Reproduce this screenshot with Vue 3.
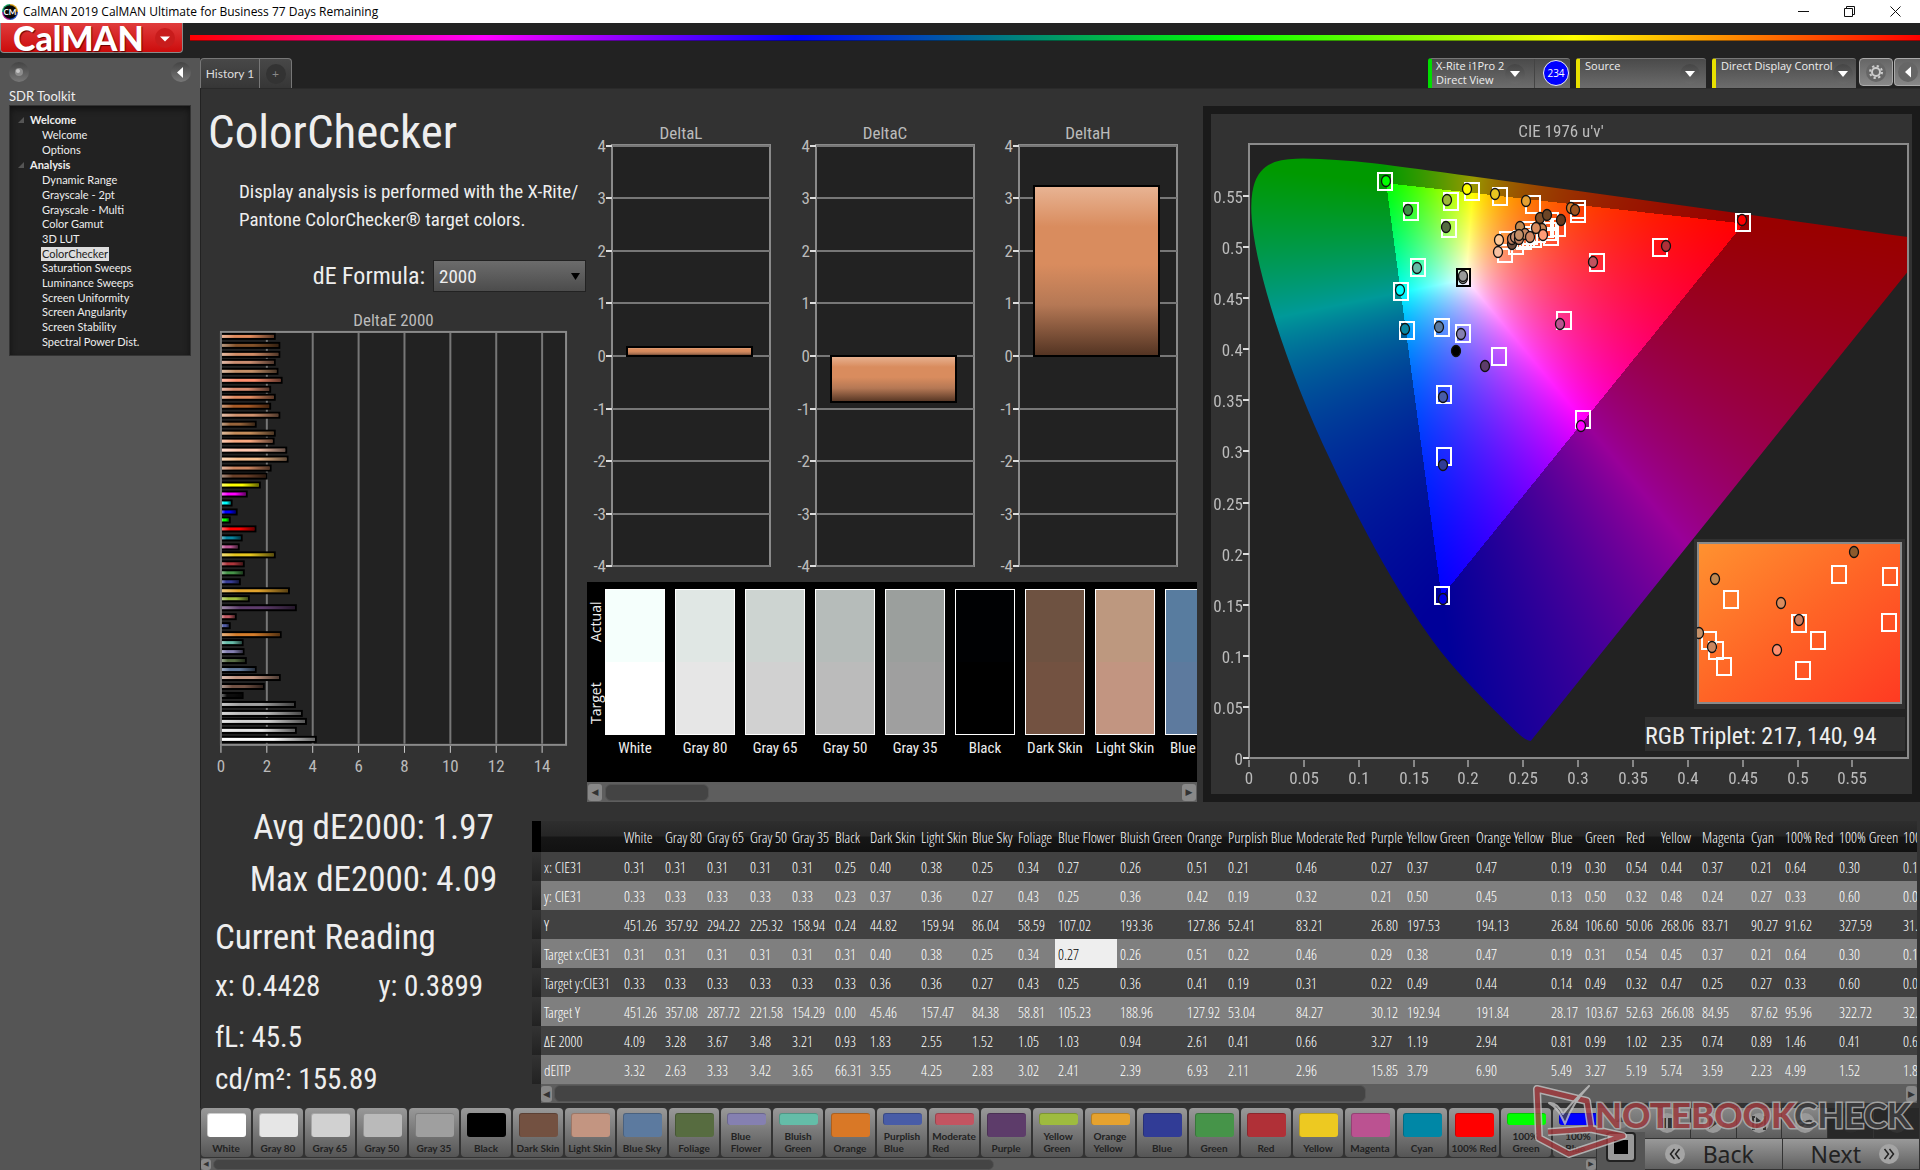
<script setup>
import { onMounted, ref } from 'vue'

const tree = [
  { title: 'Welcome', items: ['Welcome', 'Options'] },
  {
    title: 'Analysis',
    items: ['Dynamic Range', 'Grayscale - 2pt', 'Grayscale - Multi', 'Color Gamut', '3D LUT', 'ColorChecker', 'Saturation Sweeps', 'Luminance Sweeps', 'Screen Uniformity', 'Screen Angularity', 'Screen Stability', 'Spectral Power Dist.'],
  },
]

// DeltaE 2000 bars, top to bottom: colour and value
const deBars = [
  ['#e08a5c', 2.3], ['#84522a', 2.5], ['#d08c66', 2.5], ['#c98c70', 2.3], ['#c49068', 2.42], ['#ff9070', 2.6],
  ['#d98c70', 2.1], ['#e08a60', 2.3], ['#a85a26', 2.1], ['#d0926e', 2.5], ['#96633a', 1.47], ['#c48c5a', 2.3],
  ['#f8a880', 2.25], ['#ffc8b0', 2.8], ['#f8c090', 2.86], ['#cc8560', 2.12], ['#6c4028', 1.95],
  ['#ffff00', 1.65], ['#ff00ff', 1.08], ['#00ffff', 0.42], ['#0000ff', 0.64], ['#00ff00', 0.34], ['#ff0000', 1.46],
  ['#0885a1', 0.86], ['#bb5695', 0.73], ['#e7c71f', 2.3], ['#af363c', 0.95], ['#469449', 0.95], ['#383d96', 0.78],
  ['#e0a32e', 2.92], ['#9dbc40', 1.17], ['#5e3c6c', 3.22], ['#c15a63', 0.6], ['#505ba6', 0.34], ['#d67e2c', 2.56],
  ['#67bdaa', 0.9], ['#8580b1', 0.94], ['#576c43', 1.04], ['#627a9d', 1.47], ['#c29682', 2.52], ['#735244', 1.82],
  ['#0c0c0c', 0.9], ['#a0a0a0', 3.18], ['#bbbbbb', 3.48], ['#d0d0d0', 3.66], ['#e6e6e6', 3.22], ['#ffffff', 4.09],
]

const deltas = [
  { name: 'DeltaL', x: 25, title: 94, top: 235, height: 9 },
  { name: 'DeltaC', x: 229, title: 298, top: 244, height: 46 },
  { name: 'DeltaH', x: 432, title: 501, top: 74, height: 170 },
]
const deltaTicks = [4, 3, 2, 1, 0, -1, -2, -3, -4]
const deltaY = (v) => Math.round(244 - v * 52.6)

const patches = [
  ['White', '#f5fffc', '#ffffff'], ['Gray 80', '#e0e7e4', '#e6e6e6'], ['Gray 65', '#cdd4d1', '#d1d1d1'],
  ['Gray 50', '#b6bcba', '#bbbbbb'], ['Gray 35', '#9b9f9d', '#9f9f9f'], ['Black', '#000103', '#000000'],
  ['Dark Skin', '#6e5241', '#735241'], ['Light Skin', '#bd987f', '#c29581'], ['Blue Sky', '#587c9f', '#5d7a9e'],
]

const columns = [
  ['White', 41], ['Gray 80', 42], ['Gray 65', 43], ['Gray 50', 42], ['Gray 35', 43], ['Black', 35], ['Dark Skin', 51],
  ['Light Skin', 51], ['Blue Sky', 46], ['Foliage', 40], ['Blue Flower', 62], ['Bluish Green', 67], ['Orange', 41],
  ['Purplish Blue', 68], ['Moderate Red', 75], ['Purple', 36], ['Yellow Green', 69], ['Orange Yellow', 75], ['Blue', 34],
  ['Green', 41], ['Red', 35], ['Yellow', 41], ['Magenta', 49], ['Cyan', 34], ['100% Red', 54], ['100% Green', 64], ['100% Blue', 50],
]
const rows = [
  ['x: CIE31', '0.31 0.31 0.31 0.31 0.31 0.25 0.40 0.38 0.25 0.34 0.27 0.26 0.51 0.21 0.46 0.27 0.37 0.47 0.19 0.30 0.54 0.44 0.37 0.21 0.64 0.30 0.15'],
  ['y: CIE31', '0.33 0.33 0.33 0.33 0.33 0.23 0.37 0.36 0.27 0.43 0.25 0.36 0.42 0.19 0.32 0.21 0.50 0.45 0.13 0.50 0.32 0.48 0.24 0.27 0.33 0.60 0.06'],
  ['Y', '451.26 357.92 294.22 225.32 158.94 0.24 44.82 159.94 86.04 58.59 107.02 193.36 127.86 52.41 83.21 26.80 197.53 194.13 26.84 106.60 50.06 268.06 83.71 90.27 91.62 327.59 31.65'],
  ['Target x:CIE31', '0.31 0.31 0.31 0.31 0.31 0.31 0.40 0.38 0.25 0.34 0.27 0.26 0.51 0.22 0.46 0.29 0.38 0.47 0.19 0.31 0.54 0.45 0.37 0.21 0.64 0.30 0.15'],
  ['Target y:CIE31', '0.33 0.33 0.33 0.33 0.33 0.33 0.36 0.36 0.27 0.43 0.25 0.36 0.41 0.19 0.31 0.22 0.49 0.44 0.14 0.49 0.32 0.47 0.25 0.27 0.33 0.60 0.06'],
  ['Target Y', '451.26 357.08 287.72 221.58 154.29 0.00 45.46 157.47 84.38 58.81 105.23 188.96 127.92 53.04 84.27 30.12 192.94 191.84 28.17 103.67 52.63 266.08 84.95 87.62 95.96 322.72 32.58'],
  ['ΔE 2000', '4.09 3.28 3.67 3.48 3.21 0.93 1.83 2.55 1.52 1.05 1.03 0.94 2.61 0.41 0.66 3.27 1.19 2.94 0.81 0.99 1.02 2.35 0.74 0.89 1.46 0.41 0.68'],
  ['dEITP', '3.32 2.63 3.33 3.42 3.65 66.31 3.55 4.25 2.83 3.02 2.41 2.39 6.93 2.11 2.96 15.85 3.79 6.90 5.49 3.27 5.19 5.74 3.59 2.23 4.99 1.52 1.86'],
].map(([label, values]) => ({ label, values: values.split(' ') }))

const swatches = [
  ['White', '#ffffff'], ['Gray 80', '#e6e6e6'], ['Gray 65', '#d1d1d1'], ['Gray 50', '#bababa'], ['Gray 35', '#9f9f9f'],
  ['Black', '#000000'], ['Dark Skin', '#735141'], ['Light Skin', '#c39581'], ['Blue Sky', '#5c7a9f'], ['Foliage', '#576c40'],
  ['Blue Flower', '#8580b1', 1], ['Bluish Green', '#64bda8', 1], ['Orange', '#d97826'], ['Purplish Blue', '#485ca7', 1],
  ['Moderate Red', '#c35461', 1], ['Purple', '#5d3c6a'], ['Yellow Green', '#9ebb3f', 1], ['Orange Yellow', '#e6a22e', 1],
  ['Blue', '#313c96'], ['Green', '#469449'], ['Red', '#b03037'], ['Yellow', '#edc921'], ['Magenta', '#bb5291'],
  ['Cyan', '#0087a6'], ['100% Red', '#ff0000'], ['100% Green', '#00ff00', 1], ['100% Blue', '#0000ff', 1],
]

// CIE diagram, in the units of the 701 x 680 drawing; the plot spans 38..697 by 30..644
const targets = [
  [174, 67], [200, 97], [240, 87], [238, 114], [207, 153], [190, 177], [196, 216], [231, 213], [252, 219], [288, 242],
  [261, 77], [289, 82], [322, 90], [367, 95], [367, 99], [386, 148], [353, 206], [532, 108], [449, 133], [233, 280],
  [372, 305], [233, 342], [231, 481],
  [294, 139], [296, 126], [305, 131], [310, 125], [313, 126], [316, 124], [319, 121], [323, 124], [340, 107],
  [347, 113], [340, 122], [338, 117], [335, 114], [316, 116], [327, 119],
]
const readings = [
  [175, 67, '#00ff00'], [197, 96, '#3d8f45'], [236, 86, '#9cb838'], [235, 113, '#546b40'], [206, 154, '#64bba5'],
  [189, 176, '#00ffff'], [194, 215, '#0885a0'], [228, 213, '#5c7a9f'], [250, 220, '#8580b1'], [245, 237, '#000000'],
  [256, 75, '#ffff00'], [284, 80, '#e9c520'], [315, 87, '#e5a030'], [360, 94, '#d87a28'], [364, 96, '#a05520'],
  [252, 164, '#c0c0c0'], [252, 162, '#9a9a9a'], [382, 148, '#c1535f'], [349, 210, '#b9548f'], [531, 106, '#ff0000'],
  [455, 132, '#af3038'], [274, 252, '#5d3c6a'], [232, 283, '#485ca7'], [370, 312, '#ff00ff'], [232, 351, '#313c96'],
  [232, 485, '#0000e0'],
  [329, 104, '#80502a'], [336, 101, '#6c4526'], [350, 106, '#65391f'], [309, 113, '#c08850'], [288, 126, '#ffc896'],
  [287, 138, '#f8c0a0'], [301, 130, '#6c4a3a'], [301, 125, '#c08060'], [304, 123, '#c99070'], [308, 125, '#c08060'],
  [314, 120, '#c88860'], [308, 121, '#c49068'], [319, 123, '#d08864'], [331, 115, '#c08050'], [325, 114, '#d98c5e'],
  [332, 121, '#ff9c78'],
]
const insetTargets = [[142, 32], [193, 34], [34, 57], [102, 81], [192, 80], [121, 98], [12, 98], [19, 108], [27, 124], [106, 128]]
const insetReadings = [[157, 10, '#8c5a2c'], [18, 37, '#c08850'], [84, 61, '#d98c5e'], [102, 78, '#d08060'], [80, 108, '#ff9070'], [15, 105, '#c88560'], [2, 91, '#c49068']]
const uTicks = ['0', '0.05', '0.1', '0.15', '0.2', '0.25', '0.3', '0.35', '0.4', '0.45', '0.5', '0.55']
const uX = (i) => Math.round(38 + i * 54.85)
const vY = (i) => Math.round(644 - i * 51.1)

// spectral locus, CIE 1931 xy
const locus = [
  [0.1741, 0.005], [0.1714, 0.0051], [0.1644, 0.0109], [0.1566, 0.0177], [0.144, 0.0297], [0.1355, 0.0399],
  [0.1241, 0.0578], [0.1096, 0.0868], [0.0913, 0.1327], [0.0687, 0.2007], [0.0454, 0.295], [0.0235, 0.4127],
  [0.0082, 0.5384], [0.0039, 0.6548], [0.0139, 0.7502], [0.0389, 0.812], [0.0743, 0.8338], [0.1142, 0.8262],
  [0.1547, 0.8059], [0.2296, 0.7543], [0.3016, 0.6923], [0.3731, 0.6245], [0.4441, 0.5547], [0.5125, 0.4866],
  [0.5752, 0.4242], [0.627, 0.3725], [0.6658, 0.334], [0.6915, 0.3083], [0.719, 0.2809], [0.7347, 0.2653],
]
const plot = ref(null)

onMounted(() => {
  const W = 659
  const H = 614
  const sx = 1097
  const sy = 1022
  const layer = document.createElement('canvas')
  layer.width = W
  layer.height = H
  const lctx = layer.getContext('2d')
  const img = lctx.createImageData(W, H)
  for (let j = 0; j < H; j++) {
    for (let i = 0; i < W; i++) {
      const u = (i + 0.5) / sx
      const v = (H - j - 0.5) / sy
      const d = 6 * u - 16 * v + 12
      const x = (9 * u) / d
      const y = (4 * v) / d
      const z = 1 - x - y
      const rgb = [
        3.2406 * x - 1.5372 * y - 0.4986 * z,
        -0.9689 * x + 1.8758 * y + 0.0415 * z,
        0.0557 * x - 0.204 * y + 1.057 * z,
      ]
      const max = Math.max(...rgb)
      const k = (Math.min(...rgb) < 0 ? 153 : 255) / max
      const o = (j * W + i) * 4
      for (let c = 0; c < 3; c++) img.data[o + c] = Math.max(0, rgb[c] * k)
      img.data[o + 3] = 255
    }
  }
  lctx.putImageData(img, 0, 0)

  const ctx = plot.value.getContext('2d')
  const pts = locus.map(([x, y]) => {
    const d = -2 * x + 12 * y + 3
    return [((4 * x) / d) * sx, H - ((9 * y) / d) * sy]
  })
  ctx.beginPath()
  ctx.moveTo(...pts[0])
  for (let n = 1; n < pts.length - 1; n++) {
    const [x, y] = pts[n]
    const [nx, ny] = pts[n + 1]
    ctx.quadraticCurveTo(x, y, (x + nx) / 2, (y + ny) / 2)
  }
  ctx.lineTo(...pts[pts.length - 1])
  ctx.closePath()
  ctx.clip()
  ctx.drawImage(layer, 0, 0)
})
</script>

<template>
  <div class="app">
    <header class="titlebar">
      <svg class="app-icon" viewBox="0 0 16 16" aria-hidden="true">
        <path d="M8 0a8 8 0 0 1 8 8h-8z" fill="#d8a018" />
        <path d="M16 8a8 8 0 0 1-8 8v-8z" fill="#2456c8" />
        <path d="M8 16a8 8 0 0 1-8-8h8z" fill="#b01c90" />
        <path d="M0 8a8 8 0 0 1 8-8v8z" fill="#18a060" />
        <circle cx="8" cy="8" r="6.8" fill="#080808" />
        <text x="8" y="11" text-anchor="middle" class="icon-text">CM</text>
      </svg>
      <span class="win-title">CalMAN 2019 CalMAN Ultimate for Business 77 Days Remaining</span>
      <button class="win-btn" aria-label="Minimize"><svg width="11" height="11" viewBox="0 0 11 11"><path d="M0 5.5h11" stroke="#111" /></svg></button>
      <button class="win-btn" aria-label="Restore"><svg width="11" height="11" viewBox="0 0 11 11"><path d="M.5 2.5h8v8h-8zM2.500 2.500v-2h8v8h-2" fill="none" stroke="#111" /></svg></button>
      <button class="win-btn" aria-label="Close"><svg width="11" height="11" viewBox="0 0 11 11"><path d="M.5.5l10 10M10.500.5l-10 10" stroke="#111" /></svg></button>
    </header>

    <div class="brandbar">
      <button class="brand">
        <span>CalMAN</span>
        <svg width="20" height="20" viewBox="0 0 20 20" aria-hidden="true"><circle cx="10" cy="10" r="10" fill="#c81c1c" /><path d="M5 8.500h10l-5 5z" fill="#fff" /></svg>
      </button>
      <div class="rainbow"></div>
    </div>

    <div class="body">
      <aside class="sidebar">
        <div class="side-head">
          <button class="round" aria-label="Record"><svg width="20" height="20" viewBox="0 0 20 20"><circle cx="10" cy="10" r="4" fill="#8d8d8d" /><circle cx="9" cy="9" r="2" fill="#c4c4c4" /></svg></button>
          <button class="round" aria-label="Collapse"><svg width="20" height="20" viewBox="0 0 20 20"><path d="M12 5v11l-6-5.500z" fill="#fff" /></svg></button>
        </div>
        <h2>SDR Toolkit</h2>
        <nav class="tree">
          <section v-for="group in tree" :key="group.title">
            <h3><svg width="6" height="6" viewBox="0 0 6 6" aria-hidden="true"><path d="M6 0v6H0z" fill="#555" /></svg>{{ group.title }}</h3>
            <ul>
              <li v-for="item in group.items" :key="item"><a href="#" :class="{ on: item === 'ColorChecker' }">{{ item }}</a></li>
            </ul>
          </section>
        </nav>
      </aside>

      <div class="work">
        <div class="tabbar">
          <button class="tab">History 1</button>
          <button class="tab add" aria-label="Add tab"><span>+</span></button>
          <div class="spacer"></div>
          <div class="device meter">
            <button class="device-main"><span>X-Rite i1Pro 2<br>Direct View</span><i class="drop"></i></button>
            <button class="count">234</button>
          </div>
          <button class="device source"><span>Source</span><i class="drop"></i></button>
          <button class="device display"><span>Direct Display Control</span><i class="drop"></i></button>
          <button class="tool" aria-label="Settings">
            <svg width="20" height="20" viewBox="0 0 20 20"><circle cx="10" cy="10" r="10" fill="#666" /><circle cx="10" cy="10" r="4" fill="none" stroke="#ccc" stroke-width="2" /><circle cx="10" cy="10" r="6" fill="none" stroke="#ccc" stroke-width="2" stroke-dasharray="2.300 2.410" /></svg>
          </button>
          <button class="tool last" aria-label="Hide panel">
            <svg width="20" height="20" viewBox="0 0 20 20"><circle cx="10" cy="10" r="10" fill="#666" /><path d="M13 4.500v11l-6-5.500z" fill="#fff" /></svg>
          </button>
        </div>

        <main class="page">
          <div class="top">
            <section class="intro">
              <h1>ColorChecker</h1>
              <p>Display analysis is performed with the X-Rite/<br>Pantone ColorChecker® target colors.</p>
              <div class="formula">
                <label for="formula">dE Formula:</label>
                <select id="formula"><option>2000</option></select>
              </div>
              <svg class="chart" viewBox="0 0 387 480" role="img" aria-label="DeltaE 2000">
                <defs>
                  <linearGradient id="shine">
                    <stop offset="0" stop-color="#fff" stop-opacity=".4" />
                    <stop offset=".25" stop-color="#fff" stop-opacity="0" />
                    <stop offset=".55" stop-color="#000" stop-opacity="0" />
                    <stop offset="1" stop-color="#000" stop-opacity=".6" />
                  </linearGradient>
                </defs>
                <text x="193" y="21" text-anchor="middle" class="chart-title">DeltaE 2000</text>
                <rect x="20" y="27" width="346" height="414" fill="#222" stroke="#8a8a8a" stroke-width="2" />
                <g v-for="i in 8" :key="i">
                  <path :d="`M${Math.round(20 + (i - 1) * 46)} 28V440`" stroke="#777" stroke-width="2" />
                  <path :d="`M${Math.round(20 + (i - 1) * 46)} 442v7`" stroke="#ccc" />
                  <text :x="20 + (i - 1) * 46" y="468" text-anchor="middle" class="tick">{{ (i - 1) * 2 }}</text>
                </g>
                <g v-for="(b, i) in deBars" :key="'b' + i">
                  <rect x="21" :y="Math.round(28 + i * 8.78)" :width="b[1] * 23 + 1" height="7" fill="#000" />
                  <rect x="21" :y="Math.round(28 + i * 8.78) + 2" :width="b[1] * 23 - 1" height="3" :fill="b[0]" />
                  <rect x="21" :y="Math.round(28 + i * 8.78) + 2" :width="b[1] * 23 - 1" height="3" fill="url(#shine)" />
                </g>
              </svg>
            </section>

            <section class="middle">
              <svg class="chart" viewBox="0 0 610 470" role="img" aria-label="DeltaL, DeltaC and DeltaH">
                <defs>
                  <linearGradient id="skin" x2="0" y2="1">
                    <stop offset="0" stop-color="#e8b494" />
                    <stop offset=".24" stop-color="#d98c5e" />
                    <stop offset=".46" stop-color="#d98c5e" />
                    <stop offset=".7" stop-color="#b57855" />
                    <stop offset="1" stop-color="#523322" />
                  </linearGradient>
                </defs>
                <g v-for="d in deltas" :key="d.name">
                  <text :x="d.title" y="27" text-anchor="middle" class="chart-title">{{ d.name }}</text>
                  <rect :x="d.x" y="33" width="158" height="421" fill="#222" stroke="#8a8a8a" stroke-width="2" />
                  <g v-for="t in deltaTicks" :key="t">
                    <path :d="`M${d.x} ${deltaY(t)}h158`" stroke="#777" stroke-width="2" />
                    <path :d="`M${d.x - 6} ${deltaY(t)}h6`" stroke="#ddd" stroke-width="2" />
                    <text :x="d.x - 6" :y="deltaY(t) + 6" text-anchor="end" class="tick">{{ t }}</text>
                  </g>
                  <rect :x="d.x + 15" :y="d.top" width="125" :height="d.height" fill="url(#skin)" stroke="#000" stroke-width="2" />
                </g>
              </svg>
              <div class="strip">
                <div class="strip-view">
                  <div class="sides"><span>Actual</span><span>Target</span></div>
                  <figure v-for="p in patches" :key="p[0]">
                    <div class="patch"><i :style="{ background: p[1] }"></i><i :style="{ background: p[2] }"></i></div>
                    <figcaption>{{ p[0] }}</figcaption>
                  </figure>
                </div>
                <div class="scroll big"><button aria-label="Left">◀</button><i class="thumb-a"></i><button aria-label="Right">▶</button></div>
              </div>
            </section>

            <section class="cie">
              <canvas ref="plot" width="659" height="614"></canvas>
              <svg class="cie-svg" viewBox="0 0 701 680" role="img" aria-label="CIE 1976 u'v'">
                <defs>
                  <linearGradient id="zoomfill" x2="1" y2="1">
                    <stop offset="0" stop-color="#ff9230" />
                    <stop offset=".5" stop-color="#ff6426" />
                    <stop offset="1" stop-color="#ff3a22" />
                  </linearGradient>
                  <clipPath id="zoomclip"><rect width="203" height="160" /></clipPath>
                </defs>
                <text x="350" y="23" text-anchor="middle" class="chart-title">CIE 1976 u'v'</text>
                <rect x="38" y="30" width="659" height="614" fill="none" stroke="#8a8a8a" stroke-width="2" />
                <g v-for="(t, i) in uTicks" :key="t">
                  <path :d="`M${uX(i)} 646v7`" stroke="#ddd" />
                  <text :x="uX(i)" y="670" text-anchor="middle" class="tick">{{ t }}</text>
                  <path :d="`M32 ${vY(i)}h6`" stroke="#ddd" stroke-width="2" />
                  <text x="32" :y="vY(i) + 7" text-anchor="end" class="tick">{{ t }}</text>
                </g>
                <g fill="none" stroke="#fff" stroke-width="2">
                  <rect v-for="(t, i) in targets" :key="i" :x="t[0] - 7" :y="t[1] - 8" width="14" height="17" />
                  <rect x="246" y="155" width="13" height="17" stroke="#000" />
                </g>
                <ellipse v-for="(r, i) in readings" :key="'r' + i" :cx="r[0]" :cy="r[1]" rx="4.500" ry="5.500" :fill="r[2]" stroke="#111" stroke-width="1.300" />
                <rect x="483" y="425" width="211" height="170" fill="#303030" />
                <g transform="translate(486 428)">
                  <rect x="1" y="1" width="203" height="160" fill="url(#zoomfill)" stroke="#8a8a8a" stroke-width="2" />
                  <g clip-path="url(#zoomclip)">
                    <g fill="none" stroke="#fff" stroke-width="2">
                      <rect v-for="(t, i) in insetTargets" :key="i" :x="t[0] - 7" :y="t[1] - 8" width="14" height="17" />
                    </g>
                    <ellipse v-for="(r, i) in insetReadings" :key="'r' + i" :cx="r[0]" :cy="r[1]" rx="4.500" ry="5.500" :fill="r[2]" stroke="#111" stroke-width="1.300" />
                  </g>
                </g>
                <rect x="434" y="603" width="260" height="34" fill="#303030" />
                <text x="434" y="630" class="triplet">RGB Triplet: 217, 140, 94</text>
              </svg>
            </section>
          </div>

          <div class="bottom">
            <section class="stats">
              <p class="avg">Avg dE2000: 1.97</p>
              <p class="avg">Max dE2000: 4.09</p>
              <h2>Current Reading</h2>
              <p class="pair"><span>x: 0.4428</span><span>y: 0.3899</span></p>
              <p class="lum">fL: 45.5</p>
              <p class="cd">cd/m²: 155.89</p>
            </section>
            <section class="grid">
              <div class="grid-view">
                <table>
                  <colgroup>
                    <col class="gutter-col"><col class="label-col">
                    <col v-for="c in columns" :key="c[0]" :style="{ width: c[1] + 'px' }">
                  </colgroup>
                  <thead>
                    <tr><td class="gutter"></td><td></td><th v-for="c in columns" :key="c[0]" scope="col">{{ c[0] }}</th></tr>
                  </thead>
                  <tbody>
                    <tr v-for="(r, ri) in rows" :key="r.label">
                      <td class="gutter"></td>
                      <th scope="row">{{ r.label }}</th>
                      <td v-for="(v, ci) in r.values" :key="ci" :class="{ picked: ri === 3 && ci === 10 }">{{ v }}</td>
                    </tr>
                  </tbody>
                </table>
              </div>
              <div class="scroll mid"><button aria-label="Left">◀</button><i class="thumb-b"></i><button aria-label="Right">▶</button></div>
            </section>
          </div>
        </main>

        <footer class="dock">
          <div class="dock-left">
            <div class="swatches">
              <button v-for="s in swatches" :key="s[0]" class="swatch" :class="{ two: s[2] }">
                <i :style="{ background: s[1] }"></i><span>{{ s[0] }}</span>
              </button>
            </div>
            <div class="scroll small"><button aria-label="Left">◀</button><i class="thumb-c"></i><button aria-label="Right">▶</button></div>
          </div>
          <div class="stopbox">
            <button class="up" aria-label="Up"><svg width="20" height="16" viewBox="0 0 20 16"><ellipse cx="10" cy="8" rx="9" ry="8" fill="#808080" /><path d="M5 10l5-5 5 5z" fill="#444" /></svg></button>
            <button class="stop" aria-label="Stop"><i></i></button>
          </div>
          <div class="transport">
            <div class="keys">
              <button aria-label="Pause"><svg viewBox="0 0 20 20"><circle cx="10" cy="10" r="10" fill="#999" /><path d="M5 5h4v10h-4zM11 5h4v10h-4z" fill="#333" /></svg></button>
              <button aria-label="Play"><svg viewBox="0 0 20 20"><circle cx="10" cy="10" r="10" fill="#999" /><path d="M6 4v12l9-6z" fill="#333" /></svg></button>
              <button aria-label="Step"><svg viewBox="0 0 20 20"><circle cx="10" cy="10" r="10" fill="#999" /><path d="M6 4h-2v12h2M14 4h2v12h-2M8 6v8l5-4z" fill="none" stroke="#333" stroke-width="2" /></svg></button>
              <button aria-label="Loop"><svg viewBox="0 0 20 20"><circle cx="10" cy="10" r="10" fill="#999" /><path d="M10 10c-2-3-7-3-7 0s5 3 7 0 7-3 7 0-5 3-7 0z" fill="none" stroke="#333" stroke-width="2" /></svg></button>
              <button class="off" aria-label="Refresh"><svg viewBox="0 0 20 20"><circle cx="10" cy="10" r="10" fill="#2c2c2c" /><path d="M15 10a5 5 0 1 1-2-4" fill="none" stroke="#1a1a1a" stroke-width="2" /></svg></button>
              <button class="off" aria-label="More"><svg viewBox="0 0 20 20"><circle cx="10" cy="10" r="10" fill="#333" /></svg></button>
            </div>
            <div class="nav">
              <button class="back"><svg width="20" height="20" viewBox="0 0 20 20" aria-hidden="true"><circle cx="10" cy="10" r="10" fill="#a4a4a4" /><path d="M9.500 5l-4 5 4 5M14.500 5l-4 5 4 5" fill="none" stroke="#222" stroke-width="1.500" /></svg><span>Back</span></button>
              <button class="next"><span>Next</span><svg width="20" height="20" viewBox="0 0 20 20" aria-hidden="true"><circle cx="10" cy="10" r="10" fill="#a4a4a4" /><path d="M5.500 5l4 5-4 5M10.500 5l4 5-4 5" fill="none" stroke="#222" stroke-width="1.500" /></svg></button>
            </div>
          </div>
          <svg class="mark" width="388" height="78" viewBox="0 0 388 78" role="img" aria-label="NOTEBOOKCHECK">
            <g fill="none" stroke-linejoin="round" opacity=".8">
              <path d="M60 44L56 17 6 5 8 54 38 70 92 52 60 45 17 48" stroke="#c4c4c4" stroke-width="8" />
              <path d="M60 44L56 17 6 5 8 54 38 70 92 52 60 45 17 48" stroke="#a33a3e" stroke-width="5" />
              <path d="M18 19c7-1 11 5 14 11 8-11 22-24 26-28-12 12-19 24-24 38-4-9-8-17-16-21z" fill="#48484a" stroke="#c4c4c4" stroke-width="2" />
            </g>
            <g class="mark-text">
              <text x="64" y="44" fill="#9c3c40">NOTEBOOK</text>
              <text x="263" y="44" fill="#3c3c3e" class="thin">CHECK</text>
            </g>
          </svg>
        </footer>
      </div>
    </div>
  </div>
</template>

<style>
body {
  margin: 0;
  background: #333;
}
</style>

<style scoped>
.app {
  --narrow: "Open Sans Condensed Light", "OpenSans-CondensedLight", "Open Sans Light Condensed", "Lato", sans-serif;
  --mid: "Roboto Condensed", "Lato", sans-serif;
  min-height: 100vh;
  display: flex;
  flex-direction: column;
  overflow: hidden;
  font-family: "Lato", sans-serif;
  color: #eee;
}
*, *::before { box-sizing: border-box; }
button { font: inherit; color: inherit; border: 0; padding: 0; margin: 0; background: none; }
h1, h2, h3, p, ul, figure { margin: 0; padding: 0; font-weight: 400; list-style: none; }
svg { display: block; flex: none; }

.titlebar { display: flex; align-items: center; height: 23px; padding-right: 2px; background: #fff; color: #000; font: 12px "Open Sans", sans-serif; }
.app-icon { width: 16px; height: 16px; margin: 0 5px 0 2px; }
.icon-text { font: bold 8px "Lato", sans-serif; fill: #fff; }
.win-title { flex: 1; }
.win-btn { width: 46px; height: 23px; display: grid; place-items: center; }

.brandbar { display: flex; height: 35px; background: #222; gap: 7px; }
.brand { display: flex; align-items: center; justify-content: space-between; width: 183px; height: 30px; padding: 0 7px 0 12px; border: 1px solid #8a8a8a; border-top: 0; border-radius: 0 0 4px 4px; background: linear-gradient(#e03c3c, #cc0c0c); color: #fff; font: 900 34px/28px "Lato", sans-serif; text-shadow: 1px 1px 1px #600; }
.rainbow { flex: 1; height: 6px; margin-top: 12px; background: linear-gradient(90deg, #f00, #f0f 17%, #00f 35%, #0f0 60%, #ff0 80%, #f00); border-bottom: 1px solid #0006; }

.body { flex: 1; display: flex; }
.sidebar { width: 200px; background: #555; padding: 4px 9px; font-size: 11px; }
.side-head { display: flex; justify-content: space-between; }
.round { width: 20px; height: 20px; border-radius: 50%; background: linear-gradient(#444, #777); }
.sidebar h2 { font-size: 13px; line-height: 16px; margin: 6px 0 1px; }
.tree { background: #222; border: 1px solid #333; margin-top: 0; padding: 6px 0 5px; line-height: 15px; min-height: 251px; box-shadow: inset 0 3px 6px #111; }
.tree h3 { display: flex; align-items: center; gap: 6px; padding-left: 8px; font-size: 11px; font-weight: 700; line-height: 15px; }
.tree ul { padding: 0 0 0 31px; }
.tree li { height: 15px; }
.tree li:nth-child(3n) { height: 14px; }
.tree a { display: inline-block; color: inherit; text-decoration: none; padding: 0 1px; line-height: 14px; }
.tree a.on { background: #ddd; color: #222; }

.work { flex: 1; min-width: 0; display: flex; flex-direction: column; position: relative; }
.tabbar { display: flex; height: 30px; background: #222; }
.tab { height: 30px; width: 59px; background: linear-gradient(#484848, #363636); border: 1px solid #777; border-width: 1px 0 0 1px; font-size: 12px; color: #ddd; border-radius: 4px 0 0 0; }
.add { width: 33px; border-width: 1px 1px 0 1px; border-radius: 0 4px 0 0; display: grid; place-items: center; }
.add span { width: 20px; height: 20px; line-height: 19px; border-radius: 50%; background: #333; color: #888; }
.spacer { flex: 1; }
.device { display: flex; height: 30px; background: linear-gradient(#4a4a4a, #6c6c6c); border-top: 1px solid #777; border-left: 4px solid #e8e000; border-radius: 3px 3px 0 0; font: 11px/14px "Open Sans", sans-serif; text-align: left; margin-right: 6px; }
.device > span { flex: 1; padding: 0 0 0 5px; white-space: nowrap; }
.drop { width: 20px; height: 20px; margin: 5px 6px 0 0; border-radius: 50%; background: linear-gradient(#454545, #6a6a6a); display: grid; place-items: center; flex: none; }
.drop::before { content: ""; border: 5px solid transparent; border-top: 6px solid #fff; border-bottom: 0; }
.device-main { display: flex; width: 103px; text-align: left; border-right: 1px solid #444; }
.device-main span { flex: 1; padding-left: 4px; white-space: nowrap; }
.device-main .drop { margin-right: 9px; }
.meter { width: 142px; border-left-color: #0d0; }
.source { width: 130px; }
.source, .display { padding: 0; }
.display { width: 144px; margin-right: 3px; }
.display > span { flex: 0 0 114px; }
.count { width: 26px; height: 26px; margin: 1px 0 0 8px; border-radius: 50%; border: 1px solid #eee; background: #00f; color: #fff; font-size: 10px; text-align: center; }
.tool { width: 34px; height: 28px; display: grid; place-items: center; border: 1px solid #aaa; border-radius: 4px; background: linear-gradient(#666, #888); margin-right: 1px; }
.last { width: 26px; margin-right: 0; border-right: 0; border-radius: 4px 0 0 4px; }

.page { flex: 1; background: #323232; border-left: 1px solid #222; border-top: 1px solid #2a2a2a; font-family: var(--mid); }
.top { display: grid; grid-template-columns: 386px 610px minmax(0, 1fr); column-gap: 0; }
.chart { width: 100%; height: auto; }
.chart-title { font-size: 17px; fill: #bbb; font-family: var(--mid); }
.tick { font-size: 17px; fill: #bbb; font-family: var(--mid); }
.triplet { font-size: 24px; fill: #eee; font-family: var(--mid); }
.intro h1 { font-size: 47px; line-height: 60px; padding: 13px 0 0 7px; }
.intro p { font-size: 19px; line-height: 28px; padding: 16px 0 0 38px; white-space: nowrap; }
.formula { display: flex; align-items: center; justify-content: flex-end; gap: 8px; margin: 26px 1px 13px 0; }
.formula label { font-size: 24px; line-height: 32px; }
.formula select { appearance: none; width: 153px; height: 32px; padding: 3px 5px 1px; border: 1px solid #222; border-radius: 0; color: #eee; font: 19px/26px var(--mid); background: url("data:image/svg+xml,%3Csvg xmlns='http://www.w3.org/2000/svg' width='9' height='7'%3E%3Cpath d='M0 0h9l-4.500 7z'/%3E%3C/svg%3E") no-repeat right 5px center, linear-gradient(#6c6c6c, #4c4c4c); }
.middle { padding-top: 23px; }
.strip-view { display: flex; background: #000; height: 200px; overflow: hidden; padding: 7px 0 0; }
.sides { display: flex; flex-direction: column; flex: none; width: 18px; }
.sides span { writing-mode: vertical-rl; transform: rotate(180deg); line-height: 17px; font-size: 14px; text-align: center; font-family: "Open Sans", sans-serif; }
.sides span:first-child { height: 66px; }
.sides span:last-child { height: 96px; }
.strip figure { width: 60px; margin-right: 10px; flex: none; }
.patch { height: 146px; border: 1px solid #fff; display: flex; flex-direction: column; }
.patch i { flex: 1; }
.strip figcaption { text-align: center; font-size: 15px; line-height: 26px; white-space: nowrap; }

.scroll { display: flex; align-items: center; background: #5e5e5e; }
.scroll button { background: #888; color: #333; border-radius: 3px; font-size: 9px; line-height: 16px; font-family: "DejaVu Sans", sans-serif; overflow: hidden; }
.scroll button:last-child { margin-left: auto; }
.scroll i { background: #444; border-radius: 6px; border: 1px solid #555; }
.big { height: 20px; padding: 0 1px; }
.big button { width: 14px; height: 17px; }
.thumb-a { width: 104px; height: 17px; margin-left: 3px; }
.mid { height: 19px; margin-left: 9px; }
.mid button { width: 11px; height: 16px; }
.thumb-b { flex: 0 0 59%; height: 17px; margin-left: 2px; }
.small { height: 12px; }
.small button { width: 10px; height: 11px; line-height: 11px; font-size: 7px; }
.thumb-c { flex: 0 0 56%; height: 11px; margin-left: 2px; }

.cie { margin: 17px 0 0 6px; border: 8px solid #1a1a1a; position: relative; align-self: start; }
.cie canvas { position: absolute; left: 5.42%; top: 4.41%; width: 94%; height: 90.3%; background: #222; }
.cie-svg { width: 100%; height: auto; position: relative; }

.bottom { display: flex; }
.stats { width: 331px; flex: none; padding-left: 14px; font-size: 29px; line-height: 40px; white-space: nowrap; }
.avg { font-size: 35px; line-height: 52px; text-align: center; }
.stats h2 { font-size: 35px; padding-top: 12px; }
.pair { display: flex; gap: 58px; padding-top: 8px; }
.lum { padding-top: 11px; }
.cd { padding-top: 2px; }
.grid { flex: 1; min-width: 0; padding: 19px 3px 0 0; }
.grid-view { overflow: hidden; }
table { table-layout: fixed; border-collapse: collapse; width: 1418px; font-family: var(--narrow); font-size: 15px; line-height: 20px; }
.gutter-col { width: 9px; }
.label-col { width: 80px; }
th, td { padding: 1px 0 0 3px; text-align: left; font-weight: inherit; white-space: nowrap; height: 29px; overflow: hidden; color: #fff; }
thead td, thead th { height: 31px; background: linear-gradient(#2e2e2e, #262626 48%, #161616 52%, #111); overflow: visible; }
thead .gutter { background: #000; }
tbody tr { background: #414141; }
tbody tr:nth-child(even) { background: #7f7f7f; }
tbody .gutter { background: linear-gradient(#333, #222); }
td.picked { background: #eee; color: #000; }

.dock { display: flex; height: 62px; background: #333; position: relative; padding: 0 1px; }
.dock-left { flex: 1; min-width: 0; display: flex; flex-direction: column; }
.swatches { display: flex; gap: 2px; height: 50px; overflow: hidden; }
.swatch { flex: 0 0 50px; height: 49px; background: linear-gradient(#999, #555); border-radius: 4px; display: flex; flex-direction: column; align-items: center; padding: 5px 0 0; color: #222; font-weight: 700; font-size: 10px; line-height: 12px; }
.swatch i { width: 39px; height: 24px; border-radius: 3px; border: 1px solid #0003; border-right: 0; border-bottom: 0; flex: none; }
.swatch span { margin-top: 5px; white-space: nowrap; }
.two i { height: 12px; }
.two span { white-space: normal; text-align: left; width: min-content; }
.stopbox { width: 49px; background: #555; border-left: 1px solid #333; display: flex; flex-direction: column; align-items: center; }
.up { height: 24px; width: 100%; display: grid; place-items: center; background: linear-gradient(#888, #666); }
.stop { width: 30px; height: 30px; border: 2px solid #222; border-radius: 4px; background: #999; display: grid; place-items: center; }
.stop i { width: 14px; height: 14px; background: #000; }
.transport { width: 274px; display: flex; flex-direction: column; gap: 1px; }
.keys { display: flex; gap: 1px; height: 30px; }
.keys button { flex: 1; display: grid; place-items: center; background: linear-gradient(#888, #5c5c5c); }
.keys svg { width: 20px; height: 20px; }
.keys .off { background: #282828; }
.nav { display: flex; gap: 1px; height: 30px; }
.nav button { flex: 1; display: flex; align-items: center; justify-content: center; gap: 18px; background: linear-gradient(#999, #606060); color: #222; font: 23px/28px "Noto Sans", sans-serif; }
.nav .back { padding-right: 8px; }
.nav .next { padding-left: 8px; }
.mark { position: absolute; right: 1px; bottom: 8px; overflow: visible; pointer-events: none; }
.mark-text { font: 900 35px "Lato", sans-serif; stroke: #b0b0b0; stroke-width: 3px; paint-order: stroke; opacity: 0.85; }
.thin { font-weight: 700; }
</style>
